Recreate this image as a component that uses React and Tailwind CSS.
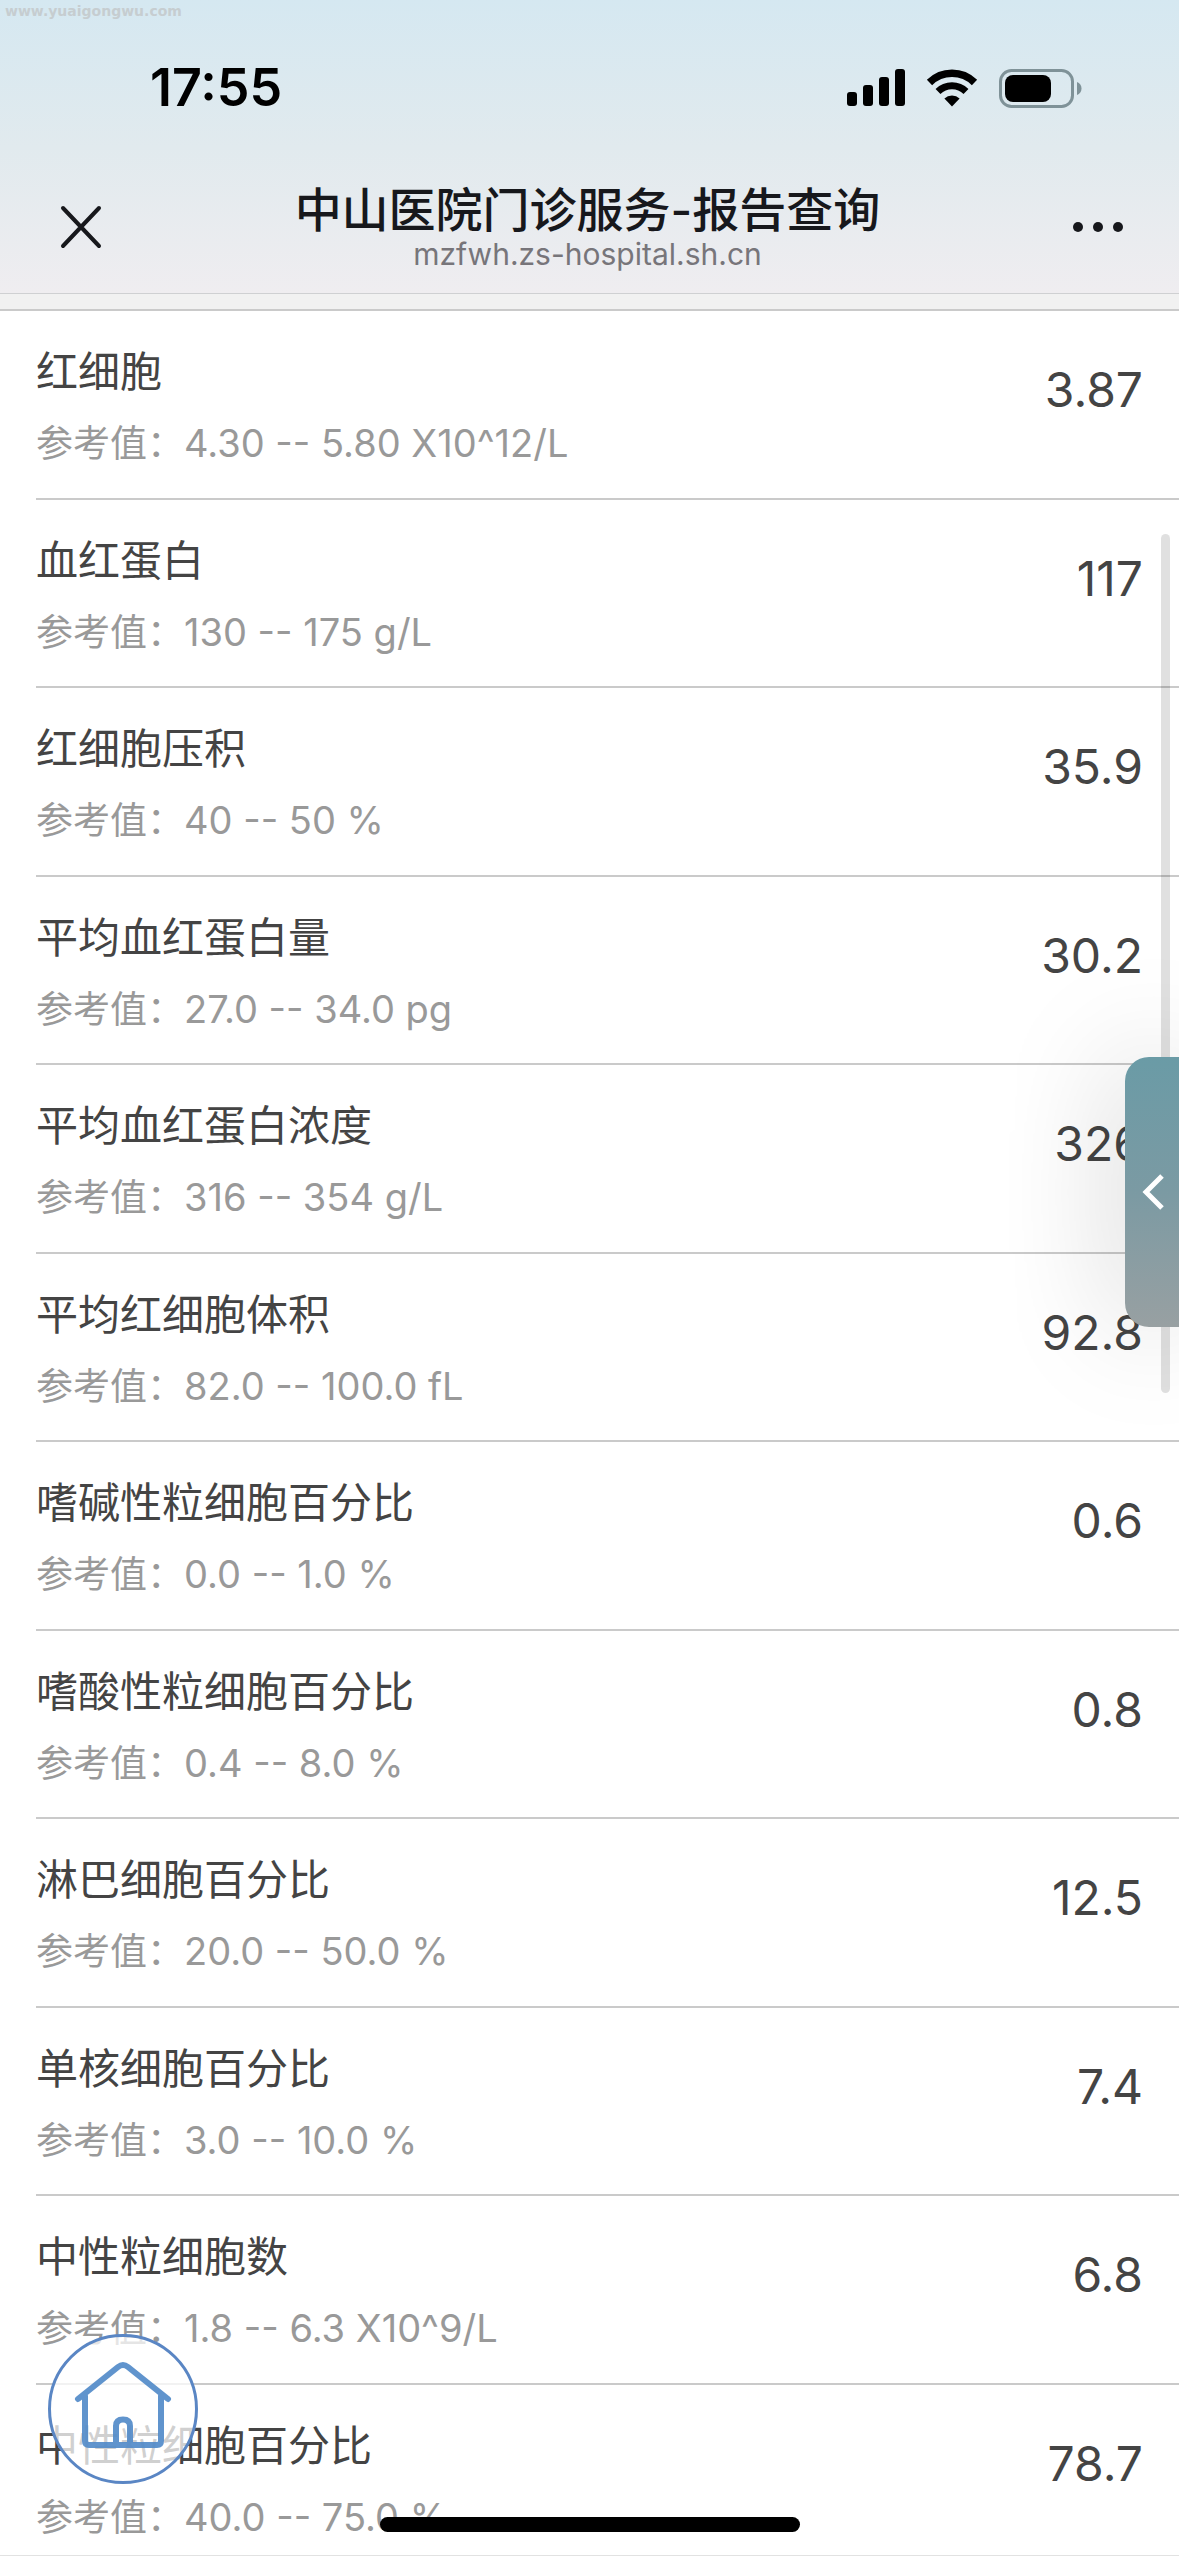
import React from "react";

const results = [
  { name: "红细胞", range: "4.30 -- 5.80 X10^12/L", value: "3.87" },
  { name: "血红蛋白", range: "130 -- 175 g/L", value: "117" },
  { name: "红细胞压积", range: "40 -- 50 %", value: "35.9" },
  { name: "平均血红蛋白量", range: "27.0 -- 34.0 pg", value: "30.2" },
  { name: "平均血红蛋白浓度", range: "316 -- 354 g/L", value: "326" },
  { name: "平均红细胞体积", range: "82.0 -- 100.0 fL", value: "92.8" },
  { name: "嗜碱性粒细胞百分比", range: "0.0 -- 1.0 %", value: "0.6" },
  { name: "嗜酸性粒细胞百分比", range: "0.4 -- 8.0 %", value: "0.8" },
  { name: "淋巴细胞百分比", range: "20.0 -- 50.0 %", value: "12.5" },
  { name: "单核细胞百分比", range: "3.0 -- 10.0 %", value: "7.4" },
  { name: "中性粒细胞数", range: "1.8 -- 6.3 X10^9/L", value: "6.8" },
  { name: "中性粒细胞百分比", range: "40.0 -- 75.0 %", value: "78.7" },
];

function SignalIcon() {
  return (
    <svg width="58" height="38" viewBox="0 0 58 38" fill="#000">
      <rect x="0" y="23" width="10" height="14" rx="3" />
      <rect x="16" y="16" width="10" height="21" rx="3" />
      <rect x="32" y="8" width="10" height="29" rx="3" />
      <rect x="48" y="0" width="10" height="37" rx="3" />
    </svg>
  );
}

function WifiIcon() {
  return (
    <svg width="52" height="38" viewBox="0 0 52 38" fill="none">
      <path d="M3.5 13.5a32 32 0 0 1 45 0" stroke="#000" strokeWidth="7.5" />
      <path d="M12 22.5a20 20 0 0 1 28 0" stroke="#000" strokeWidth="7" />
      <path d="M26 37.5l-7.6-8a11 11 0 0 1 15.2 0z" fill="#000" />
    </svg>
  );
}

function BatteryIcon() {
  return (
    <svg width="84" height="39" viewBox="0 0 84 39" fill="none">
      <rect x="1.5" y="1.5" width="72" height="36" rx="11" stroke="#7f9298" strokeWidth="3" />
      <rect x="6" y="6" width="46" height="27" rx="8" fill="#000" />
      <path d="M78 13c2.800 1 4.500 3.500 4.500 6.500s-1.700 5.500-4.500 6.500z" fill="#7f9298" />
    </svg>
  );
}

function StatusBar() {
  return (
    <div className="flex h-[176px] items-center justify-between pr-[96px] pl-[150px]">
      <span className="text-[52px] leading-[60px] font-semibold text-black">17:55</span>
      <div className="flex items-center gap-[21px]">
        <SignalIcon />
        <WifiIcon />
        <BatteryIcon />
      </div>
    </div>
  );
}

function TitleBar() {
  return (
    <div className="flex h-[117px] items-start justify-between px-[56px]">
      <button type="button" aria-label="关闭" className="mt-[26px]">
        <svg width="50" height="50" viewBox="0 0 50 50" stroke="#17181c" strokeWidth="4" strokeLinecap="round">
          <path d="M7 6l36 38M43 6L7 44" />
        </svg>
      </button>
      <div className="pt-[2px] pr-[4px] text-center">
        <h1 className="text-[47px] leading-[64px] font-medium text-[#17181c]">
          中山医院门诊服务-报告查询
        </h1>
        <p className="text-[30px] leading-[24px] text-[#77757a]">mzfwh.zs-hospital.sh.cn</p>
      </div>
      <button type="button" aria-label="更多" className="mt-[26px]">
        <svg width="50" height="50" viewBox="0 0 50 50" fill="#17181c">
          <circle cx="5" cy="25" r="5" />
          <circle cx="25" cy="25" r="5" />
          <circle cx="45" cy="25" r="5" />
        </svg>
      </button>
    </div>
  );
}

function ResultRow({ item }) {
  return (
    <li className="ml-[36px] flex items-start justify-between border-b-2 border-[#cacaca] pr-[36px] odd:h-[189px] even:h-[188px]">
      <div className="pt-[31px]">
        <h2 className="text-[42px] leading-[60px] text-[#444]">{item.name}</h2>
        <p className="mt-4 text-[37px] leading-[50px] text-[#999]">
          参考值：<span className="text-[38px]">{item.range}</span>
        </p>
      </div>
      <span className="pt-[49px] text-[48px] leading-[60px] text-[#444]">{item.value}</span>
    </li>
  );
}

function HomeButton() {
  return (
    <button
      type="button"
      aria-label="首页"
      className="absolute bottom-[71px] left-[48px] size-[150px] rounded-full border-[3px] border-[#5a86c4] bg-white/75"
    >
      <svg
        className="-m-[3px]"
        width="150"
        height="150"
        viewBox="0 0 150 150"
        fill="none"
        stroke="#4f88c8"
        strokeOpacity="0.9"
        strokeWidth="6"
        strokeLinecap="round"
        strokeLinejoin="round"
      >
        <path d="M30 65L70 33q5-4 10 0l40 32M37 62v45q0 4 4 4h68q4 0 4-4V62M68 110V92q0-6.500 7-6.500t7 6.500v18" />
      </svg>
    </button>
  );
}

function App() {
  return (
    <div className="relative flex h-screen flex-col overflow-hidden border-b border-[#e2e2e2] bg-white font-[Inter,'Noto_Sans_CJK_SC',sans-serif]">
      <header className="border-b border-[#cfd0d2] bg-linear-to-b from-[#d5e8f1] via-[#e1eaee] to-[#efedf0]">
        <StatusBar />
        <TitleBar />
      </header>
      <div className="h-[17px] shrink-0 border-b-2 border-[#cacaca] bg-[#f1f1f1]" />

      <ul className="min-h-0 flex-1 overflow-hidden">
        {results.map((item) => (
          <ResultRow key={item.name} item={item} />
        ))}
      </ul>

      <span className="absolute top-[3px] left-[5px] font-['DejaVu_Sans',sans-serif] text-[14px] leading-[16px] font-bold text-[#c6cdd0]">
        www.yuaigongwu.com
      </span>

      {/* scroll thumb */}
      <div className="absolute top-[534px] right-[9px] h-[859px] w-[9px] rounded-full bg-black/12" />

      {/* collapsed side drawer */}
      <button
        type="button"
        aria-label="展开"
        className="absolute top-[1057px] right-0 flex h-[270px] w-[54px] items-center justify-center rounded-l-[24px] bg-linear-to-b from-[#6a9ba6] via-[#7b9aa3] to-[#98a0a2] pl-1 shadow-[0_0_120px_rgba(0,0,0,0.22)]"
      >
        <svg width="24" height="40" viewBox="0 0 24 40" fill="none" stroke="#fff" strokeWidth="5">
          <path d="M20 4L4 20l16 16" />
        </svg>
      </button>

      <HomeButton />
      <div className="absolute bottom-[23px] left-1/2 h-[15px] w-[420px] -translate-x-1/2 rounded-full bg-black" />
    </div>
  );
}

export default App;
